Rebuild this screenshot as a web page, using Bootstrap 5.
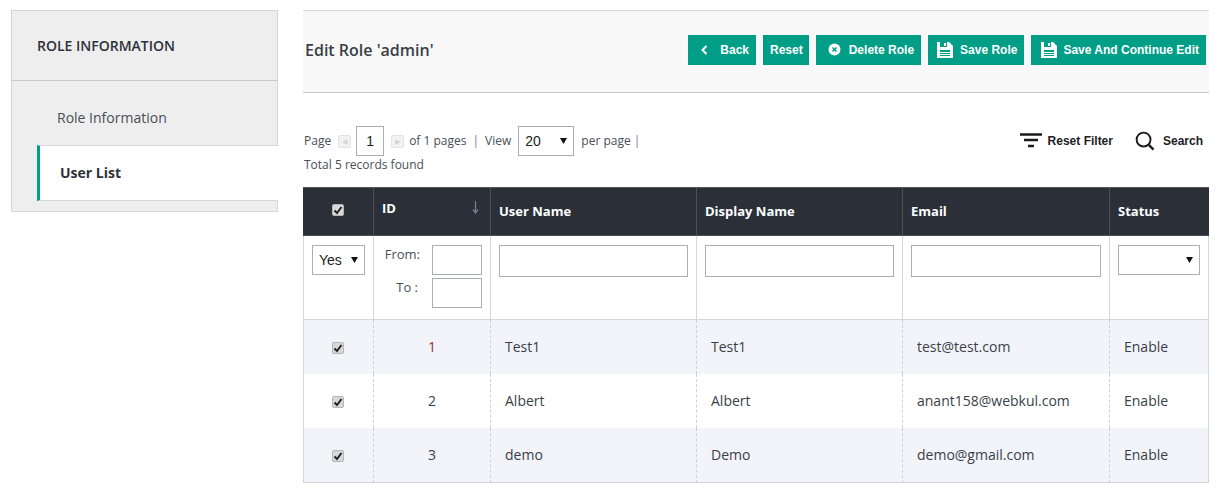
<!DOCTYPE html>
<html lang="en">
<head>
    <meta charset="UTF-8">
    <title>Edit Role</title>
    <link rel="stylesheet" href="https://cdn.jsdelivr.net/npm/bootstrap@5.3.3/dist/css/bootstrap.min.css">
    <script src="https://cdn.jsdelivr.net/npm/bootstrap@5.3.3/dist/js/bootstrap.bundle.min.js"></script>
    <style>
        body {
            font-family: "Open Sans", sans-serif;
            font-size: 14px;
            color: #333a45;
            background: #fff;
            overflow: hidden;
        }

        .page-wrap {
            padding: 10px 0 0 11px;
        }

        /* left menu */
        .side-box {
            width: 267px;
            height: 202px;
            flex: none;
            background: #eee;
            border: 1px solid #d5d6da;
            margin-right: 25px;
        }

        .side-title {
            height: 70px;
            line-height: 69px;
            padding-left: 25px;
            font-size: 14px;
            font-weight: 600;
            color: #2d323a;
            border-bottom: 1px solid #c8c8c8;
        }

        .side-link {
            height: 64px;
            margin-left: 25px;
            padding: 27px 0 0 20px;
            line-height: 20px;
            color: #4a4f57;
        }

        .side-active {
            height: 56px;
            margin: 0 -1px 0 25px;
            line-height: 54px;
            padding-left: 20px;
            background: #fff;
            font-weight: 700;
            color: #2d323a;
            border-left: 3px solid #009e87;
            border-top: 1px solid #d5d6da;
            border-bottom: 1px solid #d5d6da;
        }

        /* main column */
        .main-col {
            width: 906px;
            flex: none;
        }

        .head-bar {
            height: 83px;
            background: #f8f8f8;
            border-top: 1px solid #d5d6da;
            border-bottom: 1px solid #c8c8c8;
            padding: 0 3px 4px 2px;
        }

        .head-title {
            font-size: 16px;
            font-weight: 600;
            color: #3a3f47;
        }

        .head-btns {
            gap: 7px;
        }

        .act-btn {
            height: 30px;
            display: flex;
            align-items: center;
            background: #009e87;
            color: #fff;
            border: 0;
            border-radius: 0;
            padding: 0 7px;
            font-family: "Liberation Sans", sans-serif;
            font-size: 12px;
            font-weight: 700;
            white-space: nowrap;
        }

        .act-btn:hover {
            background: #009e87;
            color: #fff;
        }

        .act-btn svg {
            flex: none;
        }

        .act-tight {
            padding-right: 6px;
        }

        .back-icon {
            margin: 0 12px 0 6px;
        }

        .del-icon {
            margin: 0 8px 0 5px;
        }

        .save-icon {
            margin: 0 7px 0 2px;
        }

        .save-icon-wide {
            margin: 0 6px 0 3px;
        }

        .pager-row {
            height: 94px;
            padding: 33px 6px 0 1px;
            font-size: 12px;
            color: #4a4f57;
        }

        .pager-line {
            height: 30px;
        }

        .pager-total {
            line-height: 17px;
        }

        .sp3 { margin-left: 3px; }
        .sp5 { margin-left: 5px; }
        .sp6 { margin-left: 6px; }
        .sp7 { margin-left: 7px; }

        .page-arrow {
            width: 13px;
            height: 13px;
            background: #f2f2f2;
            border: 1px solid #e4e4e4;
            border-radius: 2px;
            color: #d2d2d2;
            font-size: 7px;
            line-height: 11px;
            text-align: center;
        }

        .page-num {
            width: 28px;
            height: 30px;
            border: 1px solid #aaadb5;
            background: #fff;
            text-align: center;
            font-size: 14px;
            color: #222;
            padding: 0;
            font-family: "Liberation Sans", sans-serif;
        }

        .pipe {
            color: #8a6f96;
        }

        .box-select {
            appearance: none;
            -webkit-appearance: none;
            height: 30px;
            border: 1px solid #aaadb5;
            border-radius: 0;
            padding: 0 0 0 6px;
            font-family: "Liberation Sans", sans-serif;
            font-size: 14px;
            color: #222;
            background: #fff url("data:image/svg+xml,%3Csvg xmlns='http://www.w3.org/2000/svg' width='7' height='6'%3E%3Cpath d='M0 0h7L3.500 6z' fill='%23111'/%3E%3C/svg%3E") no-repeat right 6px center;
        }

        .page-size {
            width: 56px;
        }

        .tool-row {
            margin-top: 5px;
        }

        .filter-icon {
            margin-right: 6px;
        }

        .search-icon {
            margin: 0 8px 0 22px;
        }

        .tool-link {
            font-family: "Liberation Sans", sans-serif;
            font-size: 12px;
            font-weight: 700;
            color: #222;
        }

        /* grid */
        .role-grid {
            table-layout: fixed;
            width: 906px;
            margin: 0;
            border-collapse: separate;
            border-spacing: 0;
        }

        .role-grid th {
            height: 49px;
            background: #2a2f38;
            color: #fff;
            font-size: 13px;
            font-weight: 700;
            padding: 0 0 0 8px;
            border-top: 1px solid #555;
            border-right: 1px solid #4a4f5a;
            border-bottom: 1px solid #4a4f5a;
            vertical-align: middle;
            position: relative;
        }

        .role-grid th:last-child {
            border-right: 0;
        }

        .role-grid .check-head {
            padding: 0 0 4px;
            text-align: center;
        }

        .role-grid .id-head {
            padding-bottom: 6px;
        }

        .sort-arrow {
            position: absolute;
            right: 11px;
            top: 13px;
        }

        .role-grid .filter-row td {
            height: 84px;
            padding: 9px 8px 0;
            vertical-align: top;
            border-right: 1px solid #d5d6da;
            border-bottom: 1px solid #d5d6da;
            background: #fff;
            box-shadow: none;
        }

        .role-grid .filter-row td:first-child {
            border-left: 1px solid #d5d6da;
        }

        .box-input {
            display: block;
            width: 100%;
            height: 32px;
            border: 1px solid #aaadb5;
            background: #fff;
            padding: 0;
        }

        .range-line {
            margin-bottom: 3px;
        }

        .range-input {
            width: 50px;
            height: 30px;
            border: 1px solid #aaadb5;
            background: #fff;
            padding: 0;
        }

        .range-label {
            font-size: 13px;
            line-height: 18px;
            width: 38px;
            text-align: right;
            margin-right: 12px;
            color: #4a4f57;
            white-space: nowrap;
        }

        .range-to {
            padding-right: 2px;
        }

        .role-grid .data-row td {
            height: 54px;
            padding: 0 0 2px 14px;
            vertical-align: middle;
            border-right: 1px dashed #d0d1d6;
            border-bottom: 0;
            color: #3a3f47;
            box-shadow: none;
            background: #fff;
        }

        .role-grid .data-row.shade td {
            background: #f3f4fa;
        }

        .role-grid .data-row td:first-child {
            border-left: 1px solid #d5d6da;
            padding: 0 1px 2px 0;
            text-align: center;
        }

        .role-grid .data-row td:last-child {
            border-right: 1px solid #d5d6da;
        }

        .role-grid .data-row td.id-cell {
            padding: 0 0 2px;
            text-align: center;
        }

        .role-grid .data-row:last-child td {
            height: 55px;
            border-bottom: 1px solid #cfd1dc;
        }

        .role-grid .data-row td.id-first {
            color: #8a3a3a;
        }

        .grey-check {
            appearance: none;
            -webkit-appearance: none;
            display: inline-block;
            width: 12px;
            height: 12px;
            margin: 0;
            vertical-align: middle;
            border: 1px solid #b5b5b5;
            border-radius: 2px;
            background: #d8d8d8 url("data:image/svg+xml,%3Csvg xmlns='http://www.w3.org/2000/svg' width='10' height='10'%3E%3Cpath d='M1.500 5.500L4 8l4.500-6' fill='none' stroke='%23222' stroke-width='2'/%3E%3C/svg%3E") no-repeat center;
        }
    </style>
</head>
<body>
    <div class="page-wrap d-flex align-items-start">
        <div class="side-box">
            <div class="side-title">ROLE INFORMATION</div>
            <div class="side-link">Role Information</div>
            <div class="side-active">User List</div>
        </div>

        <div class="main-col">
            <div class="head-bar d-flex align-items-center justify-content-between">
                <div class="head-title">Edit Role 'admin'</div>
                <div class="d-flex head-btns">
                    <button class="act-btn" type="button">
                        <svg class="back-icon" width="7" height="10" viewBox="0 0 7 10"><path d="M5.500 1L1.500 5l4 4" fill="none" stroke="#fff" stroke-width="2"/></svg>Back
                    </button>
                    <button class="act-btn act-tight" type="button">Reset</button>
                    <button class="act-btn" type="button">
                        <svg class="del-icon" width="13" height="13" viewBox="0 0 13 13"><circle cx="6.500" cy="6.500" r="6" fill="#fff"/><path d="M4.500 4.500l4 4m0-4l-4 4" stroke="#009e87" stroke-width="1.500"/></svg>Delete Role
                    </button>
                    <button class="act-btn" type="button">
                        <svg class="save-icon" width="16" height="16" viewBox="0 0 16 16"><path d="M0 0h12l4 4v12H0z" fill="#fff"/><rect x="3" y="0" width="7" height="5" fill="#009e87"/><rect x="7" y="1" width="2" height="3" fill="#fff"/><rect x="3" y="8" width="10" height="6" fill="#009e87"/><rect x="3" y="10" width="10" height="1" fill="#fff"/><rect x="3" y="12" width="10" height="1" fill="#fff"/></svg>Save Role
                    </button>
                    <button class="act-btn" type="button">
                        <svg class="save-icon-wide" width="16" height="16" viewBox="0 0 16 16"><path d="M0 0h12l4 4v12H0z" fill="#fff"/><rect x="3" y="0" width="7" height="5" fill="#009e87"/><rect x="7" y="1" width="2" height="3" fill="#fff"/><rect x="3" y="8" width="10" height="6" fill="#009e87"/><rect x="3" y="10" width="10" height="1" fill="#fff"/><rect x="3" y="12" width="10" height="1" fill="#fff"/></svg>Save And Continue Edit
                    </button>
                </div>
            </div>

            <div class="pager-row d-flex justify-content-between align-items-start">
                <div>
                    <div class="pager-line d-flex align-items-center">
                        <span>Page</span>
                        <span class="page-arrow sp7">&#9664;</span>
                        <input class="page-num sp5" type="text" value="1">
                        <span class="page-arrow sp7">&#9654;</span>
                        <span class="sp5">of 1 pages</span>
                        <span class="pipe sp6">|</span>
                        <span class="sp6">View</span>
                        <select class="box-select page-size sp7">
                            <option>20</option>
                        </select>
                        <span class="sp7">per page</span>
                        <span class="pipe sp3">|</span>
                    </div>
                    <div class="pager-total">Total 5 records found</div>
                </div>
                <div class="d-flex align-items-center tool-row">
                    <svg class="filter-icon" width="22" height="16" viewBox="0 0 22 16"><path d="M0 1.500h22M4 7h14M8 13h6" stroke="#1c1c1c" stroke-width="2.500"/></svg>
                    <span class="tool-link">Reset Filter</span>
                    <svg class="search-icon" width="20" height="20" viewBox="0 0 21 21"><circle cx="9" cy="9" r="7.300" fill="none" stroke="#1c1c1c" stroke-width="2"/><path d="M14.500 14.500l5 5" stroke="#1c1c1c" stroke-width="2.500"/></svg>
                    <span class="tool-link">Search</span>
                </div>
            </div>

            <table class="table role-grid">
                <colgroup>
                    <col style="width:71px">
                    <col style="width:117px">
                    <col style="width:206px">
                    <col style="width:206px">
                    <col style="width:207px">
                    <col style="width:99px">
                </colgroup>
                <thead>
                    <tr>
                        <th class="check-head"><input class="grey-check" type="checkbox" checked></th>
                        <th class="id-head">ID
                            <svg class="sort-arrow" width="7" height="13" viewBox="0 0 7 13"><path d="M3.500 0v11M1 8.500l2.500 3.500L6 8.500" fill="none" stroke="#6e7f96" stroke-width="1.300"/></svg>
                        </th>
                        <th>User Name</th>
                        <th>Display Name</th>
                        <th>Email</th>
                        <th>Status</th>
                    </tr>
                </thead>
                <tbody>
                    <tr class="filter-row">
                        <td><select class="box-select w-100"><option>Yes</option></select></td>
                        <td>
                            <div class="d-flex align-items-start range-line"><span class="range-label">From:</span><input class="range-input" type="text"></div>
                            <div class="d-flex align-items-start"><span class="range-label range-to">To :</span><input class="range-input" type="text"></div>
                        </td>
                        <td><input class="box-input" type="text"></td>
                        <td><input class="box-input" type="text"></td>
                        <td><input class="box-input" type="text"></td>
                        <td><select class="box-select w-100"><option></option></select></td>
                    </tr>
                    <tr class="data-row shade">
                        <td><input class="grey-check" type="checkbox" checked></td>
                        <td class="id-cell id-first">1</td>
                        <td>Test1</td>
                        <td>Test1</td>
                        <td>test@test.com</td>
                        <td>Enable</td>
                    </tr>
                    <tr class="data-row">
                        <td><input class="grey-check" type="checkbox" checked></td>
                        <td class="id-cell">2</td>
                        <td>Albert</td>
                        <td>Albert</td>
                        <td>anant158@webkul.com</td>
                        <td>Enable</td>
                    </tr>
                    <tr class="data-row shade">
                        <td><input class="grey-check" type="checkbox" checked></td>
                        <td class="id-cell">3</td>
                        <td>demo</td>
                        <td>Demo</td>
                        <td>demo@gmail.com</td>
                        <td>Enable</td>
                    </tr>
                </tbody>
            </table>
        </div>
    </div>
</body>
</html>
